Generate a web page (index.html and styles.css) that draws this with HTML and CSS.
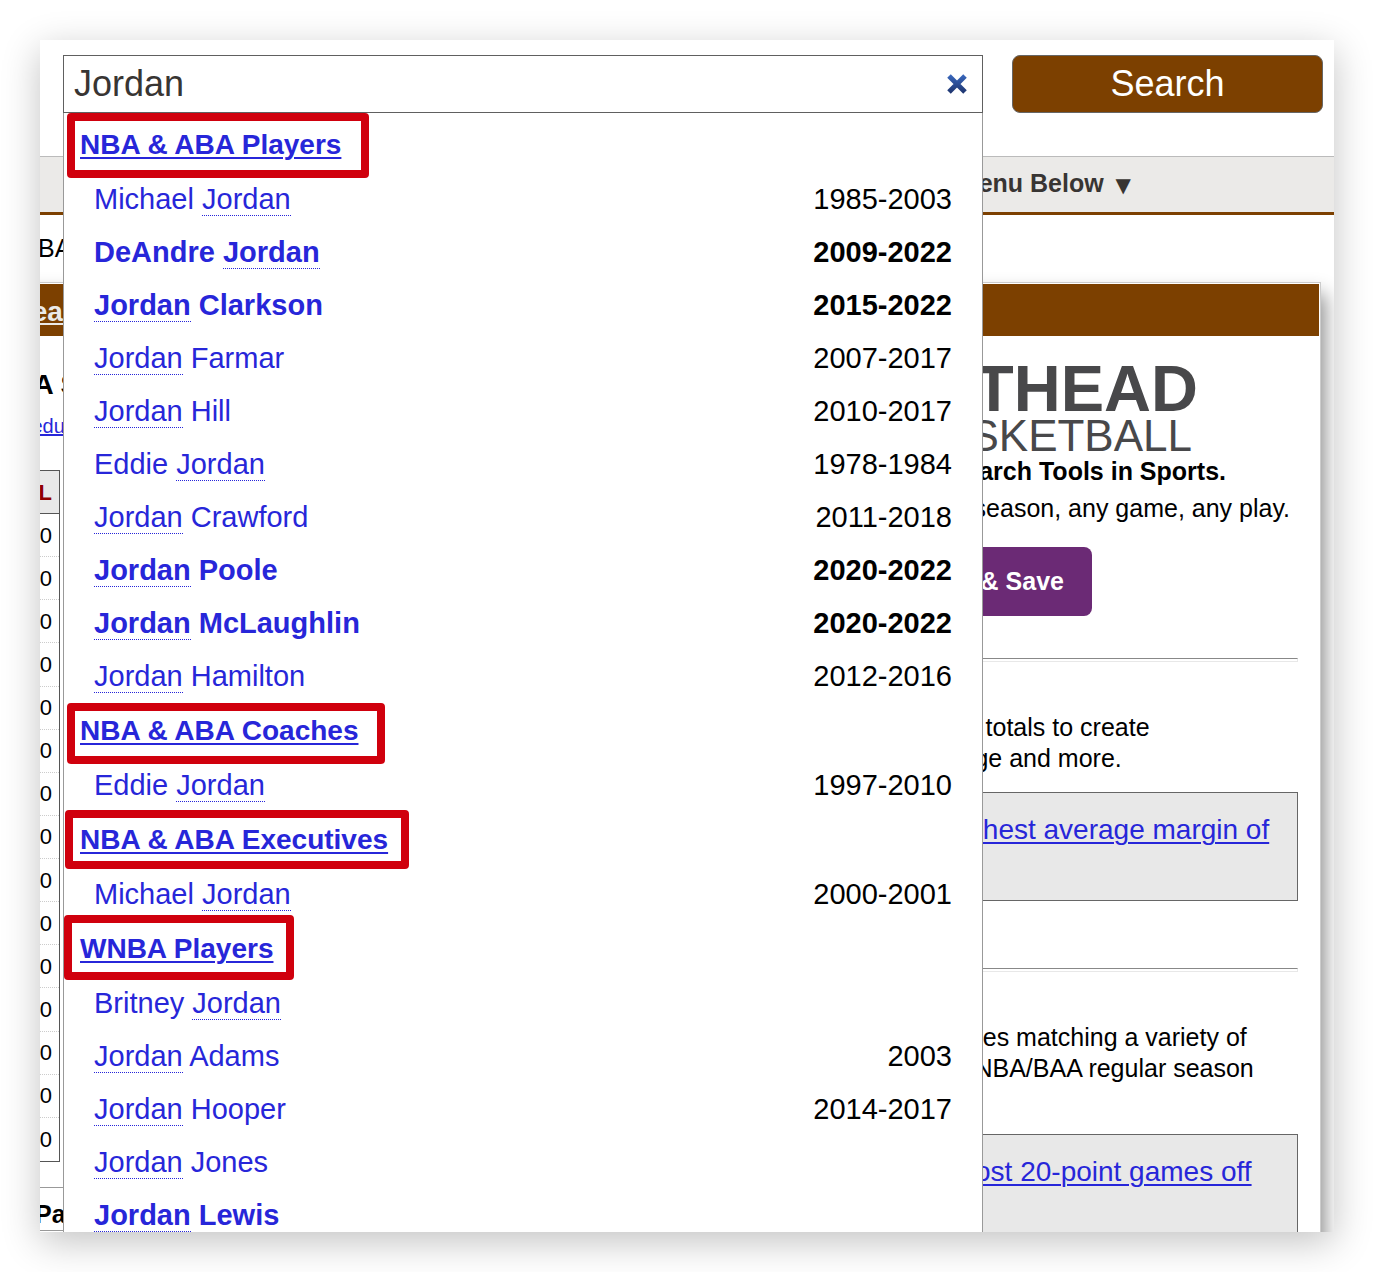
FILE: index.html
```html
<!DOCTYPE html>
<html lang="en">
<head>
    <meta charset="UTF-8">
    <title>Basketball Player Search</title>

    <link rel="stylesheet" href="styles.css">
</head>
<body>
    <div class="page">
        <header>
            <form class="search" role="search">
                <div class="field">
                    <input type="text" class="query" aria-label="Search" value="Jordan">
                    <button type="button" class="clear" aria-label="Clear">
                        <svg width="22" height="22" viewBox="0 0 22 22">
                            <defs>
                                <linearGradient id="blue" gradientUnits="userSpaceOnUse" x1="0" y1="0" x2="0" y2="22">
                                    <stop offset="0" stop-color="#3b6cc4"/>
                                    <stop offset="1" stop-color="#1b2f66"/>
                                </linearGradient>
                            </defs>
                            <path d="M3 3L19 19M19 3L3 19" stroke="url(#blue)" stroke-width="5"/>
                        </svg>
                    </button>

                    <!-- suggestions, these drop over the rest of the page -->
                    <div class="menu">
                        <h2><a href="#">NBA &amp; ABA Players</a><span class="mark mark-players"></span></h2>
                        <ul>
                            <li><a href="#">Michael <span class="hit">Jordan</span></a><span>1985-2003</span></li>
                            <li class="active"><a href="#">DeAndre <span class="hit">Jordan</span></a><span>2009-2022</span></li>
                            <li class="active"><a href="#"><span class="hit">Jordan</span> Clarkson</a><span>2015-2022</span></li>
                            <li><a href="#"><span class="hit">Jordan</span> Farmar</a><span>2007-2017</span></li>
                            <li><a href="#"><span class="hit">Jordan</span> Hill</a><span>2010-2017</span></li>
                            <li><a href="#">Eddie <span class="hit">Jordan</span></a><span>1978-1984</span></li>
                            <li><a href="#"><span class="hit">Jordan</span> Crawford</a><span>2011-2018</span></li>
                            <li class="active"><a href="#"><span class="hit">Jordan</span> Poole</a><span>2020-2022</span></li>
                            <li class="active"><a href="#"><span class="hit">Jordan</span> McLaughlin</a><span>2020-2022</span></li>
                            <li><a href="#"><span class="hit">Jordan</span> Hamilton</a><span>2012-2016</span></li>
                        </ul>
                        <h2><a href="#">NBA &amp; ABA Coaches</a><span class="mark mark-coaches"></span></h2>
                        <ul>
                            <li><a href="#">Eddie <span class="hit">Jordan</span></a><span>1997-2010</span></li>
                        </ul>
                        <h2><a href="#">NBA &amp; ABA Executives</a><span class="mark mark-executives"></span></h2>
                        <ul>
                            <li><a href="#">Michael <span class="hit">Jordan</span></a><span>2000-2001</span></li>
                        </ul>
                        <h2><a href="#">WNBA Players</a><span class="mark mark-wnba"></span></h2>
                        <ul>
                            <li><a href="#">Britney <span class="hit">Jordan</span></a></li>
                            <li><a href="#"><span class="hit">Jordan</span> Adams</a><span>2003</span></li>
                            <li><a href="#"><span class="hit">Jordan</span> Hooper</a><span>2014-2017</span></li>
                            <li><a href="#"><span class="hit">Jordan</span> Jones</a></li>
                            <li class="active"><a href="#"><span class="hit">Jordan</span> Lewis</a></li>
                        </ul>
                    </div>
                </div>
                <button type="submit" class="go">Search</button>
            </form>
        </header>

        <nav>Full Site Menu Below <span class="arrow">▼</span></nav>

        <p class="crumbs">NBA</p>

        <main>
            <section class="panel scores">
                <h3 class="bar"><a href="#">Season</a></h3>
                <h4 class="standings-title">NBA Standings</h4>
                <a class="schedule" href="#">Schedule</a>
                <table class="standings">
                    <thead><tr><th>L</th></tr></thead>
                    <tbody>
                        <tr><td>0</td></tr>
                        <tr><td>0</td></tr>
                        <tr><td>0</td></tr>
                        <tr><td>0</td></tr>
                        <tr><td>0</td></tr>
                        <tr><td>0</td></tr>
                        <tr><td>0</td></tr>
                        <tr><td>0</td></tr>
                        <tr><td>0</td></tr>
                        <tr><td>0</td></tr>
                        <tr><td>0</td></tr>
                        <tr><td>0</td></tr>
                        <tr><td>0</td></tr>
                        <tr><td>0</td></tr>
                        <tr><td>0</td></tr>
                    </tbody>
                </table>
                <h4 class="past">Past Games</h4>
            </section>

            <section class="panel stathead">
                <div class="bar"></div>
                <div class="content">
                    <div class="logo">
                        <span class="logo-top">STATHEAD</span>
                        <span class="logo-bottom">BASKETBALL</span>
                    </div>
                    <strong class="tagline">Research Tools in Sports.</strong>
                    <span class="any">any season, any game, any play.</span>
                    <a class="join" href="#">Join &amp; Save</a>
                    <hr>
                    <p>season totals to create<br>team age and more.</p>
                    <div class="example"><a href="#">for highest average margin of<br>a win</a></div>
                    <hr>
                    <p>for games matching a variety of<br>during NBA/BAA regular season</p>
                    <div class="example last"><a href="#">the most 20-point games off<br>bench</a></div>
                </div>
            </section>
        </main>
    </div>
</body>
</html>
```
FILE: styles.css
```css
*{
    box-sizing: border-box;
}

body{
    margin: 0;
    padding: 40px;
    background: #fff;
    color: #000;
    font-family: "Liberation Sans", Arial, Helvetica, sans-serif;
    font-size: 25px;
}

h2, h3, h4, p, ul{
    margin: 0;
    padding: 0;
}

a{
    color: #2726d9;
}

.page{
    height: calc(100vh - 80px);
    overflow: hidden;
    background: #fff;
    box-shadow: 0 10px 36px rgba(0, 0, 0, 0.24);
}

/* search box */
.search{
    display: flex;
    gap: 29px;
    padding: 15px 11px 43px 23px;
}

.field{
    position: relative;
    z-index: 2;
    flex: 1;
    height: 58px;
}

.query{
    display: block;
    width: 100%;
    height: 58px;
    padding: 0 60px 0 10px;
    border: 1px solid #606060;
    border-radius: 0;
    outline: none;
    background: #fff;
    color: #383533;
    font-family: inherit;
    font-size: 36px;
}

.clear{
    position: absolute;
    top: 18px;
    right: 15px;
    width: 22px;
    height: 22px;
    padding: 0;
    border: 0;
    background: none;
}

.clear svg{
    display: block;
}

.go{
    width: 311px;
    height: 58px;
    padding: 0;
    border: 1px solid #666;
    border-radius: 8px;
    background: #7c4000;
    color: #fff;
    font-family: inherit;
    font-size: 36px;
}

.menu{
    position: absolute;
    top: 58px;
    left: 0;
    right: 0;
    padding: 4px 0 20px;
    border: 1px solid #999;
    border-top: 0;
    background: #fff;
}

.menu h2{
    position: relative;
    padding-left: 16px;
    font-size: 28px;
    line-height: 56px;
}

.menu h2 a{
    text-decoration-thickness: 2px;
    text-underline-offset: 3px;
}

.menu ul{
    list-style: none;
}

.menu li{
    display: flex;
    justify-content: space-between;
    padding: 0 30px;
    font-size: 29px;
    line-height: 53px;
}

.menu li a{
    text-decoration: none;
}

.menu .active{
    font-weight: bold;
}

.hit{
    border-bottom: 1px dotted #2726d9;
}

/* red boxes round the group names */
.mark{
    position: absolute;
    border: 8px solid #d0000d;
    border-radius: 4px;
    pointer-events: none;
}

.mark-players{
    top: -4px;
    left: 3px;
    width: 302px;
    height: 65px;
}

.mark-coaches{
    top: 0;
    left: 3px;
    width: 318px;
    height: 61px;
}

.mark-executives{
    top: -2px;
    left: 1px;
    width: 344px;
    height: 59px;
}

.mark-wnba{
    top: -6px;
    left: 0;
    width: 230px;
    height: 65px;
}

nav{
    height: 59px;
    padding-right: 203px;
    border-top: 1px solid #bbb;
    border-bottom: 3px solid #7c4000;
    background: #ebeae8;
    color: #383533;
    font-weight: bold;
    line-height: 53px;
    text-align: right;
}

.arrow{
    margin-left: 5px;
    font-family: "DejaVu Sans", sans-serif;
    font-size: 20px;
    font-weight: normal;
}

.crumbs{
    margin-left: -20px;
    line-height: 67px;
}

main{
    display: grid;
    grid-template-columns: 1fr 444px;
    gap: 20px;
    padding-right: 13px;
}

.panel{
    padding: 1px 0;
    border: 1px solid #ccc;
    background: #fff;
    box-shadow: 4px 12px 18px rgba(0, 0, 0, 0.45);
}

.bar{
    height: 52px;
    margin-right: 1px;
    background: #7c4000;
    font-size: 28px;
    line-height: 56px;
}

.bar a{
    color: #ebeae8;
}

/* left column runs off the edge of the window */
.scores{
    margin-left: -28px;
}

.standings-title{
    margin: 31px 0 8px -20px;
    font-size: 28px;
    line-height: 36px;
}

.schedule{
    display: block;
    margin-left: -16px;
    font-size: 20px;
    line-height: 30px;
}

.standings{
    width: 47px;
    height: 692px;
    margin-top: 29px;
    border: 1px solid #555;
    border-spacing: 0;
    font-size: 22px;
}

.standings th, .standings td{
    height: 43px;
    padding: 1px 7px 0 0;
    border-bottom: 1px dotted #ccc;
    text-align: right;
}

.standings th{
    border-bottom: 1px solid #555;
    background: #e8e8e8;
    color: #900000;
}

.standings tr:last-child td{
    border-bottom: 0;
}

.past{
    margin-top: 25px;
    padding-left: 22px;
    border-top: 1px solid #999;
    border-bottom: 1px solid #999;
    font-size: 25px;
    line-height: 52px;
    height: 44px;
}

.content{
    display: flex;
    flex-direction: column;
    padding: 20px 22px 0 20px;
}

.logo{
    display: flex;
    flex-direction: column;
    align-items: flex-end;
    margin-right: 100px;
    color: #48484a;
}

.logo-top{
    font-size: 65px;
    font-weight: bold;
    line-height: 65px;
}

.logo-bottom{
    margin-right: 6px;
    font-size: 44px;
    line-height: 30px;
}

.tagline, .any{
    align-self: flex-end;
    white-space: nowrap;
}

.tagline{
    margin-right: 72px;
    line-height: 40px;
}

.any{
    margin-right: 8px;
    line-height: 34px;
}

.join{
    align-self: flex-end;
    margin: 22px 206px 42px 0;
    padding: 0 28px;
    border-radius: 8px;
    background: #6b2a75;
    color: #fff;
    font-weight: bold;
    line-height: 69px;
    text-decoration: none;
    white-space: nowrap;
}

hr{
    width: 100%;
    height: 4px;
    margin: 0 0 50px;
    border: 1px solid #e8e8e8;
    border-top-color: #888;
}

.content p{
    line-height: 31px;
    white-space: nowrap;
}

.example{
    height: 109px;
    margin: 18px 0 67px;
    padding: 20px 6px;
    border: 1px solid #666;
    background: #e8e8e8;
    font-size: 28px;
    line-height: 34px;
    white-space: nowrap;
}

.last{
    margin-top: 50px;
}

.example a{
    text-decoration-thickness: 2px;
    text-underline-offset: 3px;
}
```
